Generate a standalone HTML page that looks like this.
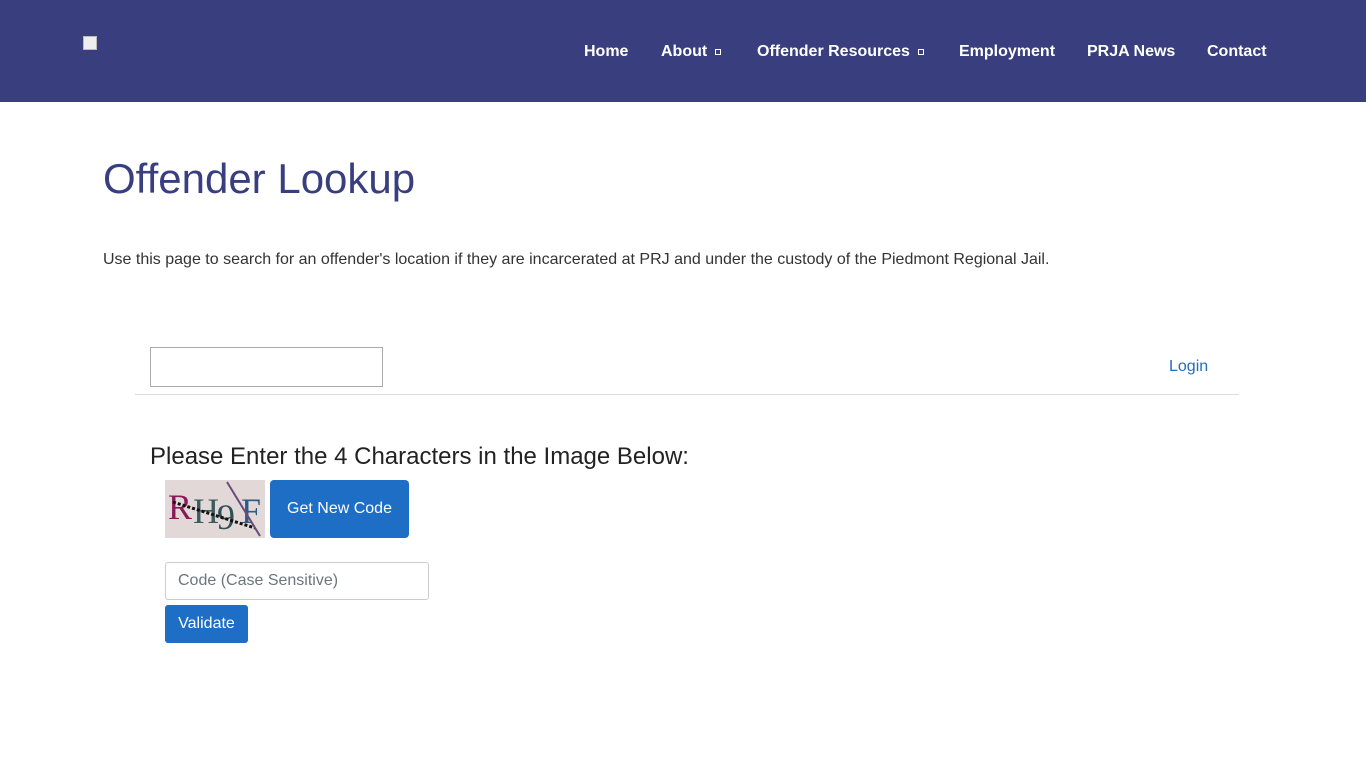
<!DOCTYPE html>
<html><head><meta charset="utf-8"><style>
body{margin:0;font-family:"Liberation Sans",Arial,sans-serif;background:#fff;width:1366px;height:768px;overflow:hidden;position:relative}
.hdr{position:absolute;left:0;top:0;width:1366px;height:102px;background:#393e7e}
.nav{position:absolute;top:43px;font-weight:bold;font-size:16px;color:#fff}
.nav span{position:absolute;white-space:nowrap}
.sq{display:inline-block;width:4px;height:4px;border:1px solid #fff;margin-left:8px;vertical-align:middle}
h1{position:absolute;left:103px;top:155px;margin:0;font-weight:normal;font-size:42px;color:#393e7e}
.p{position:absolute;left:103px;top:251px;font-size:16px;color:#333}
.a{position:absolute}
</style></head><body>
<div class="hdr">
<div class="a" style="left:83px;top:36px;width:14px;height:14px;border:1px solid #bbb;box-sizing:border-box;background:#eee"></div>
<div class="nav">
<span style="left:584px">Home</span>
<span style="left:661px">About<i class="sq"></i></span>
<span style="left:757px">Offender Resources<i class="sq"></i></span>
<span style="left:959px">Employment</span>
<span style="left:1087px">PRJA News</span>
<span style="left:1207px">Contact</span>
</div></div>
<h1>Offender Lookup</h1>
<div class="p">Use this page to search for an offender's location if they are incarcerated at PRJ and under the custody of the Piedmont Regional Jail.</div>
<div class="a" style="left:150px;top:347px;width:233px;height:40px;border:1px solid #aaa;box-sizing:border-box"></div>
<div class="a" style="left:1169px;top:358px;font-size:16px;color:#1f6ebf">Login</div>
<div class="a" style="left:135px;top:394px;width:1104px;height:1px;background:#ddd"></div>
<div class="a" style="left:150px;top:443px;font-size:24px;color:#222">Please Enter the 4 Characters in the Image Below:</div>
<div class="a" style="left:165px;top:480px;width:100px;height:58px;background:#e2d8d8;overflow:hidden;font-family:'Liberation Serif',serif;font-size:36px">
<span style="position:absolute;left:3px;top:6px;color:#8b1a5a">R</span>
<span style="position:absolute;left:28px;top:10px;color:#3b5b60">H</span>
<span style="position:absolute;left:52px;top:16px;color:#2f5055">9</span>
<span style="position:absolute;left:76px;top:10px;color:#2e5b85">F</span>
<svg style="position:absolute;left:0;top:0" width="100" height="58"><line x1="8" y1="22" x2="90" y2="48" stroke="#111" stroke-width="3" stroke-dasharray="3 2"/><line x1="62" y1="2" x2="95" y2="56" stroke="#6a4c7a" stroke-width="2"/></svg>
</div>
<div class="a" style="left:270px;top:480px;width:139px;height:58px;background:#1d6ec4;border-radius:4px;color:#fff;font-size:16px;line-height:58px;text-align:center">Get New Code</div>
<div class="a" style="left:165px;top:562px;width:264px;height:38px;border:1px solid #ccc;border-radius:3px;box-sizing:border-box;padding-left:12px;line-height:36px;font-size:16px;color:#6c757d">Code (Case Sensitive)</div>
<div class="a" style="left:165px;top:605px;width:83px;height:38px;background:#1d6ec4;border-radius:3px;color:#fff;font-size:16px;line-height:38px;text-align:center">Validate</div>
</body></html>
